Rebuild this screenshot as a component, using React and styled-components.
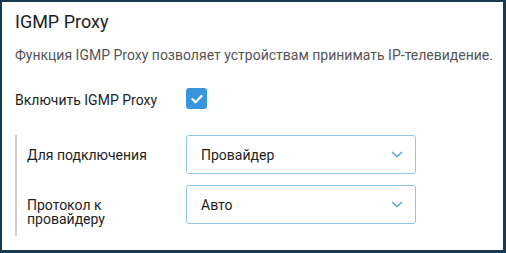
import React from "react";
import styled, { createGlobalStyle } from "styled-components";

const GlobalStyle = createGlobalStyle`
  html, body {
    margin: 0;
    padding: 0;
    background: #173a54;
    font-family: Roboto, "Liberation Sans", Arial, sans-serif;
  }
`;

const Panel = styled.div`
  box-sizing: border-box;
  margin: 2px 3px 3px 2px;
  height: 248px;
  background: #fff;
  padding: 8px 13px 0 13px;
  color: #222;
`;

const Title = styled.h2`
  margin: 0;
  font-size: 18px;
  font-weight: 400;
  line-height: 24px;
  color: #1e1e1e;
`;

const Description = styled.p`
  margin: 11px 0 0;
  font-size: 14px;
  line-height: 20px;
  color: #555;
  white-space: nowrap;
`;

const ToggleRow = styled.label`
  display: flex;
  align-items: center;
  margin-top: 23px;
  height: 21px;
  font-size: 14px;
  color: #1e1e1e;
`;

const ToggleText = styled.span`
  width: 171px;
  padding-top: 2px;
`;

const Checkbox = styled.span`
  display: flex;
  align-items: center;
  justify-content: center;
  width: 21px;
  height: 21px;
  border-radius: 3px;
  background: ${(p) => (p.checked ? "#3a96dc" : "#fff")};
`;

const Group = styled.div`
  margin-top: 26px;
  border-left: 2px solid #cfcfcf;
  padding: 0 0 10px 10px;
  display: flex;
  flex-direction: column;
  gap: 11px;
`;

const FieldRow = styled.div`
  display: flex;
  align-items: baseline;
`;

const FieldLabel = styled.span`
  width: 159px;
  padding-right: 20px;
  box-sizing: border-box;
  font-size: 14px;
  line-height: 1;
  color: #1e1e1e;
`;

const Select = styled.div`
  box-sizing: border-box;
  display: flex;
  align-items: center;
  justify-content: space-between;
  width: 230px;
  height: 39px;
  padding: 0 12px 0 14px;
  border: 1px solid #8fc6ee;
  border-radius: 3px;
  font-size: 14px;
  color: #1e1e1e;
`;

const Chevron = () => (
  <svg width="12" height="7" viewBox="0 0 12 7">
    <path d="M1 1l5 4.5L11 1" fill="none" stroke="#5b9dd7" strokeWidth="1.4" />
  </svg>
);

const fields = [
  { id: 1, label: "Для подключения", value: "Провайдер" },
  { id: 2, label: "Протокол к провайдеру", value: "Авто" },
];

function App() {
  return (
    <>
      <GlobalStyle />
      <Panel>
        <Title>IGMP Proxy</Title>
        <Description>
          Функция IGMP Proxy позволяет устройствам принимать IP-телевидение.
        </Description>
        <ToggleRow>
          <ToggleText>Включить IGMP Proxy</ToggleText>
          <Checkbox checked>
            <svg width="12" height="10" viewBox="0 0 12 10">
              <path d="M1.5 5.2l3 3L10.5 2" fill="none" stroke="#fff" strokeWidth="2.2" strokeLinecap="round" strokeLinejoin="round" />
            </svg>
          </Checkbox>
        </ToggleRow>
        <Group>
          {fields.map((f) => (
            <FieldRow key={f.id}>
              <FieldLabel>{f.label}</FieldLabel>
              <Select>
                <span>{f.value}</span>
                <Chevron />
              </Select>
            </FieldRow>
          ))}
        </Group>
      </Panel>
    </>
  );
}

export default App;
